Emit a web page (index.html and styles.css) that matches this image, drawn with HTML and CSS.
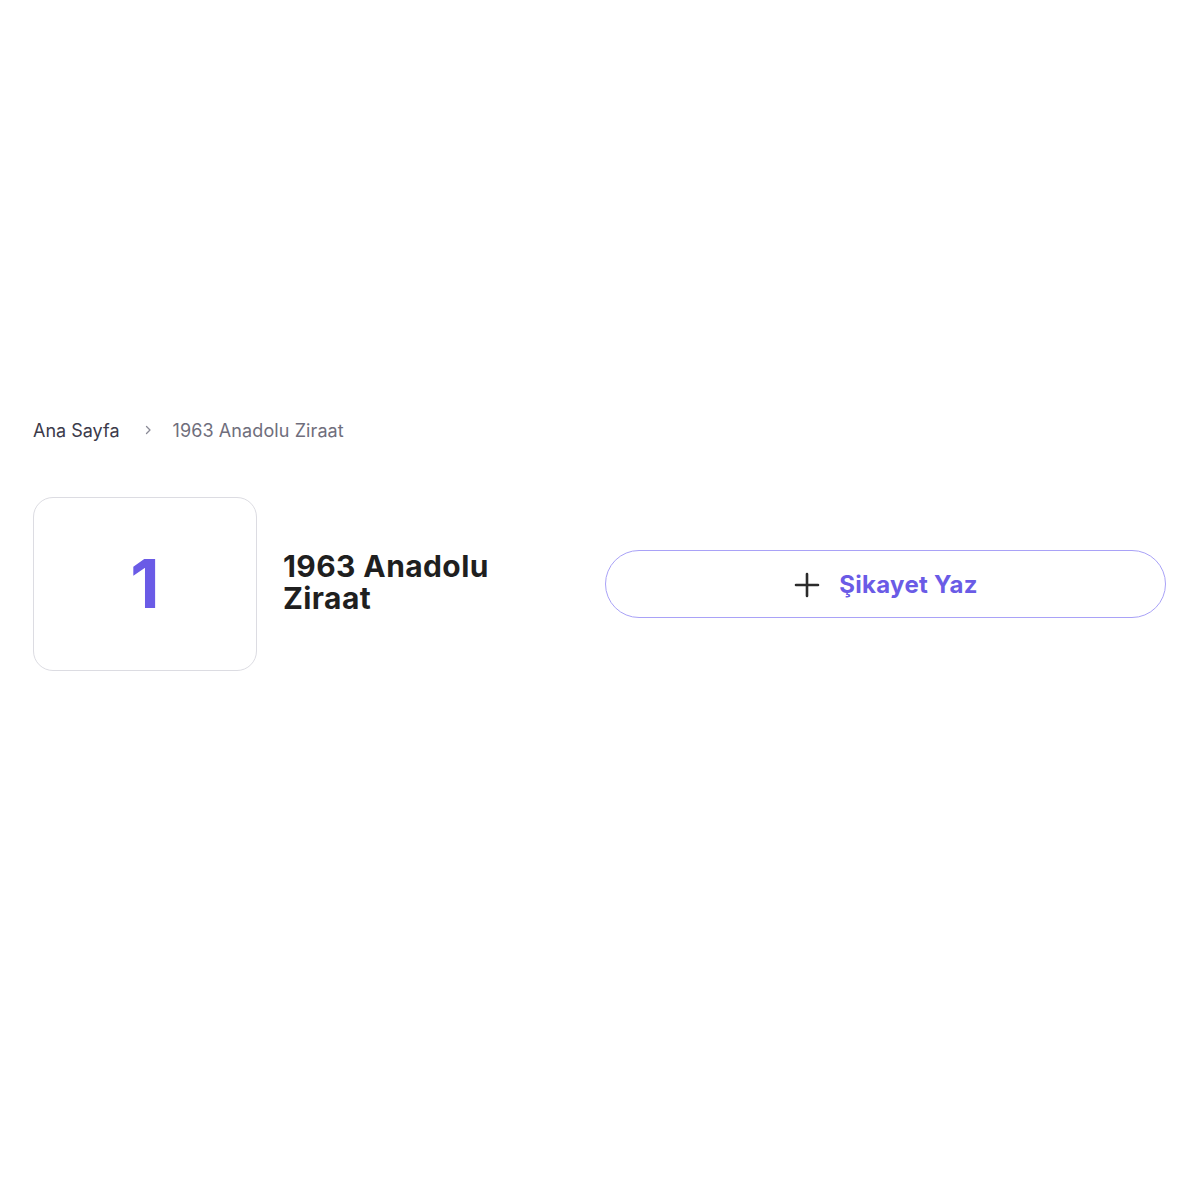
FILE: index.html
```html
<!DOCTYPE html>
<html lang="tr">
<head>
<meta charset="utf-8">
<link rel="stylesheet" href="styles.css">
</head>
<body>
<div class="page">
  <nav class="crumbs">
    <a class="crumb-link">Ana Sayfa</a>
    <svg class="chev" width="12" height="12" viewBox="0 0 12 12"><path d="M4.5 2.5 L8 6 L4.5 9.5" fill="none" stroke="#8a8a96" stroke-width="1.3" stroke-linecap="round" stroke-linejoin="round"/></svg>
    <span class="crumb-current">1963 Anadolu Ziraat</span>
  </nav>
  <section class="head">
    <div class="logo-box"><span class="logo-num">1</span></div>
    <h1 class="title">1963 Anadolu<br>Ziraat</h1>
    <button class="write-btn">
      <svg width="28" height="28" viewBox="0 0 28 28"><path d="M14 3 V25 M3 14 H25" stroke="#2b2b2b" stroke-width="2.6" stroke-linecap="round"/></svg>
      <span>Şikayet Yaz</span>
    </button>
  </section>
</div>
</body>
</html>
```
FILE: styles.css
```css
html, body { margin: 0; padding: 0; background: #fff; }
body { font-family: "Inter", "Liberation Sans", sans-serif; }
.page { padding: 418px 34px 0 33px; }
.crumbs { display: flex; align-items: center; font-size: 18px; height: 24px; letter-spacing: 0; }
.crumb-link { color: #3b3a4a; }
.chev { margin: 0 18px 0 23px; }
.crumb-current { color: #6f6e7c; letter-spacing: 0.1px; }
.head { display: flex; align-items: center; margin-top: 55px; }
.logo-box { width: 222px; height: 172px; border: 1px solid #dcdce2; border-radius: 20px; display: flex; align-items: center; justify-content: center; flex: none; }
.logo-num { font-size: 68px; font-weight: 700; color: #6a5be6; line-height: 1; margin-top: -2px; }
.title { margin: -4px 0 0 26px; font-size: 30px; font-weight: 700; line-height: 32px; color: #1f1f1f; width: 296px; flex: none; letter-spacing: 0.4px; }
.write-btn { flex: 1; margin-left: 26px; height: 68px; border: 1.5px solid #a9a2f7; border-radius: 34px; background: #fff; display: flex; align-items: center; justify-content: center; gap: 18px; font-family: inherit; font-size: 24px; font-weight: 700; color: #6a5be6; padding: 0; letter-spacing: 0.3px; }
.write-btn svg { margin-top: 1px; }
```
